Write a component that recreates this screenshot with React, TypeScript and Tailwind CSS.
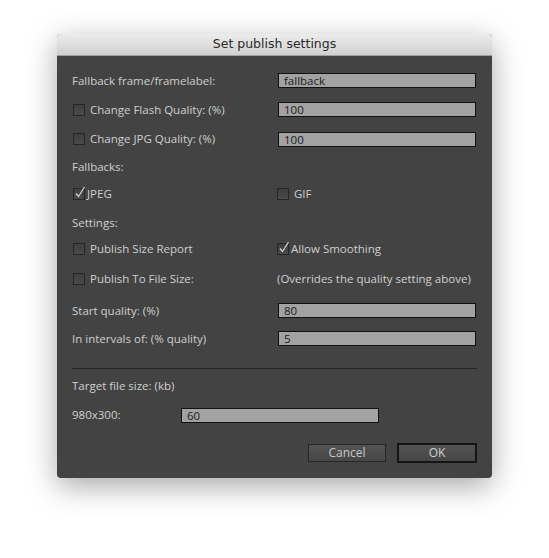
import React from "react";

const FONT = { fontFamily: '"Open Sans", "Liberation Sans", sans-serif' };

function Check({ checked }: { checked?: boolean }) {
  return (
    <span className="relative inline-block w-[12px] h-[12px] border border-[#262626] bg-[linear-gradient(#3e3e3e,#4a4a4a)] shrink-0">
      {checked && (
        <svg className="absolute left-[0px] top-[-3px]" width="12" height="13" viewBox="0 0 12 13">
          <path d="M2 7.5 L4.5 10.5 L10.5 1" stroke="#d0d0d0" strokeWidth="1.3" fill="none" />
        </svg>
      )}
    </span>
  );
}

function Input({ value, w = "w-[198px]" }: { value: string; w?: string }) {
  return (
    <div className={`${w} h-[15px] bg-[#a2a2a2] border border-[#111] pl-[5px] text-[#1c1c1c] text-[11.5px] leading-[13px] flex items-center`}>
      {value}
    </div>
  );
}

export default function App() {
  return (
    <div className="w-[549px] h-[558px] bg-white pt-[34px] pl-[57px]" style={FONT}>
      <div className="w-[435px] h-[444px] rounded-[4px] bg-[#434343] shadow-[0_8px_30px_rgba(0,0,0,0.35)] flex flex-col overflow-hidden text-[11.5px] font-medium text-[#cfcfcf] whitespace-nowrap">
        <div className="h-[22px] shrink-0 bg-[linear-gradient(#ececec,#d0d0d0)] border-b border-[#a0a0a0] flex items-center justify-center text-[#2a2a2a] text-[12.5px] font-normal" style={{ fontFamily: '"DejaVu Sans", sans-serif' }}>
          Set publish settings
        </div>
        <div className="flex flex-col pl-[15px] pr-[16px] pt-[10px]">
          <div className="h-[29px] flex items-center">
            <span className="w-[206px]">Fallback frame/framelabel:</span>
            <Input value="fallback" />
          </div>
          <div className="h-[29px] flex items-center">
            <span className="w-[206px] flex items-center gap-[5px] pl-[1px]"><Check />Change Flash Quality: (%)</span>
            <Input value="100" />
          </div>
          <div className="h-[30px] flex items-center">
            <span className="w-[206px] flex items-center gap-[5px] pl-[1px]"><Check />Change JPG Quality: (%)</span>
            <Input value="100" />
          </div>
          <div className="h-[26px] flex items-center">Fallbacks:</div>
          <div className="h-[28px] flex items-center">
            <span className="w-[205px] flex items-center gap-[2px] pl-[1px]"><Check checked />JPEG</span>
            <span className="flex items-center gap-[5px]"><Check />GIF</span>
          </div>
          <div className="h-[30px] flex items-center">Settings:</div>
          <div className="h-[22px] flex items-center">
            <span className="w-[205px] flex items-center gap-[5px] pl-[1px]"><Check />Publish Size Report</span>
            <span className="flex items-center gap-[2px]"><Check checked />Allow Smoothing</span>
          </div>
          <div className="h-[38px] flex items-center">
            <span className="w-[205px] flex items-center gap-[5px] pl-[1px]"><Check />Publish To File Size:</span>
            <span>(Overrides the quality setting above)</span>
          </div>
          <div className="h-[25px] flex items-center">
            <span className="w-[206px]">Start quality: (%)</span>
            <Input value="80" />
          </div>
          <div className="h-[31px] flex items-center">
            <span className="w-[206px]">In intervals of: (% quality)</span>
            <Input value="5" />
          </div>
          <div className="mt-[14px] h-[1px] bg-[#242424] mr-[-1px]" />
          <div className="h-[34px] flex items-center">Target file size: (kb)</div>
          <div className="h-[24px] flex items-center">
            <span className="w-[109px]">980x300:</span>
            <Input value="60" />
          </div>
          <div className="flex justify-end gap-[11px] pt-[16px] mr-[-1px]">
            <button className="w-[78px] h-[18px] mt-[1px] border border-[#262626] bg-[linear-gradient(#535353,#474747)] text-[#c8c8c8] text-[12px] leading-none">Cancel</button>
            <button className="w-[80px] h-[20px] border-2 border-[#151515] bg-[linear-gradient(#535353,#474747)] text-[#d0d0d0] text-[12px] leading-none">OK</button>
          </div>
        </div>
      </div>
    </div>
  );
}
